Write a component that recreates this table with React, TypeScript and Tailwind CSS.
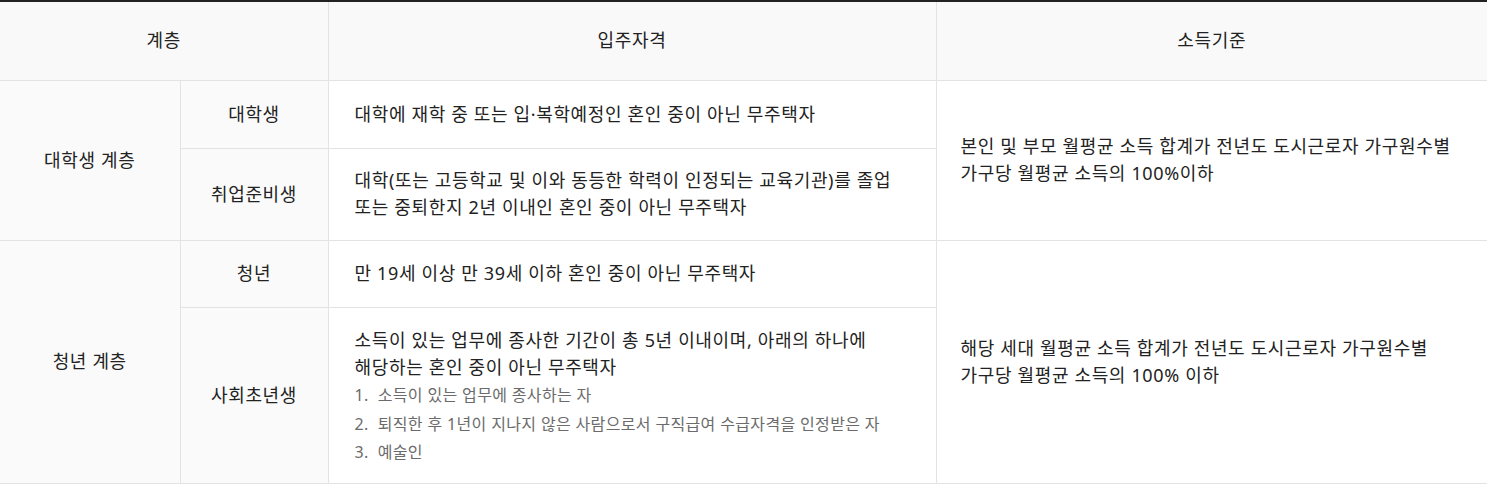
const font = { fontFamily: '"Noto Sans", "Noto Sans CJK KR", sans-serif' };

const subList = [
  '소득이 있는 업무에 종사하는 자',
  '퇴직한 후 1년이 지나지 않은 사람으로서 구직급여 수급자격을 인정받은 자',
  '예술인',
];

export default function App() {
  return (
    <div className="w-[1487px] bg-white text-[#222] text-[18px] tracking-[0.65px]" style={font}>
      <table className="w-full table-fixed border-collapse border-t-2 border-t-[#222]">
        <colgroup>
          <col className="w-[180px]" />
          <col className="w-[148px]" />
          <col className="w-[608px]" />
          <col />
        </colgroup>
        <thead>
          <tr className="h-[79px] bg-[#f9f9f9]">
            <th colSpan={2} className="border-r border-b border-[#e3e3e3] font-normal text-center">계층</th>
            <th className="border-r border-b border-[#e3e3e3] font-normal text-center">입주자격</th>
            <th className="border-b border-[#e3e3e3] font-normal text-center">소득기준</th>
          </tr>
        </thead>
        <tbody className="leading-[27px]">
          <tr className="h-[68px]">
            <td rowSpan={2} className="bg-[#fafafa] border-r border-b border-[#e3e3e3] text-center">대학생 계층</td>
            <td className="bg-[#fafafa] border-r border-b border-[#e3e3e3] text-center">대학생</td>
            <td className="border-r border-b border-[#e3e3e3] pl-[26px] pr-4">
              대학에 재학 중 또는 입·복학예정인 혼인 중이 아닌 무주택자
            </td>
            <td rowSpan={2} className="border-b border-[#e3e3e3] pl-[24px] pr-4">
              본인 및 부모 월평균 소득 합계가 전년도 도시근로자 가구원수별
              <br />
              가구당 월평균 소득의 100%이하
            </td>
          </tr>
          <tr className="h-[92px]">
            <td className="bg-[#fafafa] border-r border-b border-[#e3e3e3] text-center">취업준비생</td>
            <td className="border-r border-b border-[#e3e3e3] pl-[26px] pr-4">
              대학(또는 고등학교 및 이와 동등한 학력이 인정되는 교육기관)를 졸업
              <br />
              또는 중퇴한지 2년 이내인 혼인 중이 아닌 무주택자
            </td>
          </tr>
          <tr className="h-[67px]">
            <td rowSpan={2} className="bg-[#fafafa] border-r border-b border-[#e3e3e3] text-center">청년 계층</td>
            <td className="bg-[#fafafa] border-r border-b border-[#e3e3e3] text-center">청년</td>
            <td className="border-r border-b border-[#e3e3e3] pl-[26px] pr-4">
              만 19세 이상 만 39세 이하 혼인 중이 아닌 무주택자
            </td>
            <td rowSpan={2} className="border-b border-[#e3e3e3] pl-[24px] pr-4">
              해당 세대 월평균 소득 합계가 전년도 도시근로자 가구원수별
              <br />
              가구당 월평균 소득의 100% 이하
            </td>
          </tr>
          <tr className="h-[176px]">
            <td className="bg-[#fafafa] border-r border-b border-[#e3e3e3] text-center">사회초년생</td>
            <td className="border-r border-b border-[#e3e3e3] pl-[26px] pr-4 pt-[18px] pb-[14px]">
              <p>
                소득이 있는 업무에 종사한 기간이 총 5년 이내이며, 아래의 하나에
                <br />
                해당하는 혼인 중이 아닌 무주택자
              </p>
              <ol className="text-[16px] tracking-[0.35px] text-[#6b6b6b] leading-[28.5px]">
                {subList.map((item, i) => (
                  <li key={i}>
                    {i + 1}.&nbsp; {item}
                  </li>
                ))}
              </ol>
            </td>
          </tr>
        </tbody>
      </table>
    </div>
  );
}
